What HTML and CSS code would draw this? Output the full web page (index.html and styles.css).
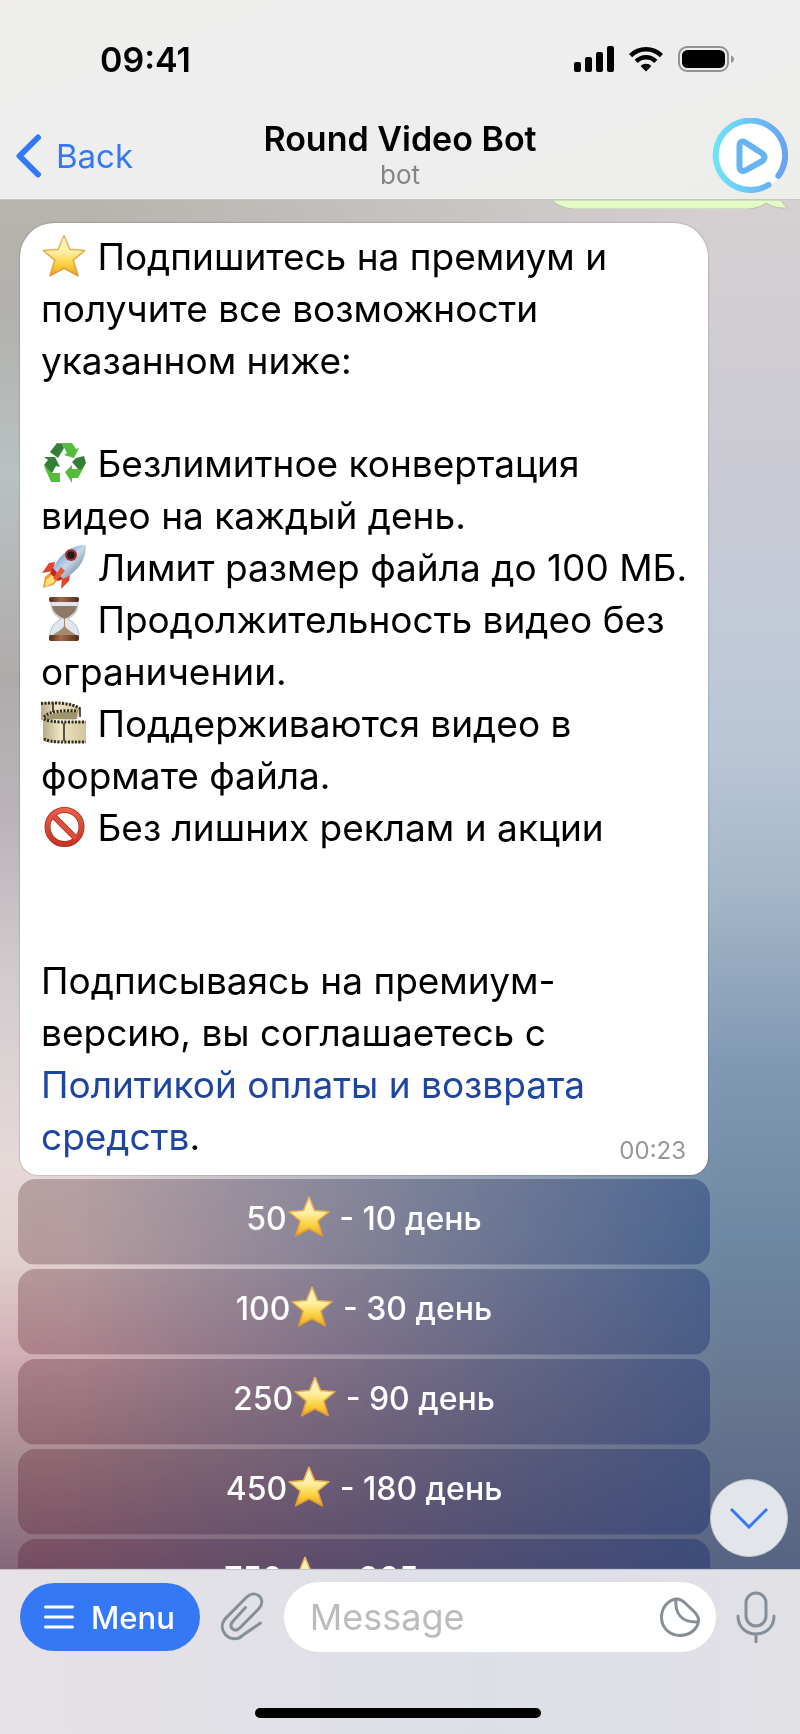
FILE: index.html
```html
<!DOCTYPE html>
<html lang="ru">
<head>
  <meta charset="UTF-8">
  <meta name="viewport" content="width=device-width, initial-scale=1.0">
  <title>Round Video Bot</title>
  <link rel="stylesheet" href="styles.css">
</head>
<body>
  <!-- shared emoji -->
  <svg class="defs" width="0" height="0" aria-hidden="true">
    <defs>
      <linearGradient id="gold" x1="0" y1="0" x2="0" y2="1">
        <stop offset="0" stop-color="#fff6cf"/>
        <stop offset=".4" stop-color="#fff0a4"/>
        <stop offset=".72" stop-color="#fbd140"/>
        <stop offset="1" stop-color="#eba52c"/>
      </linearGradient>
      <linearGradient id="gold-edge" x1="0" y1="0" x2="0" y2="1">
        <stop offset="0" stop-color="#efbb62"/>
        <stop offset="1" stop-color="#e29b2b"/>
      </linearGradient>
      <linearGradient id="hull" x1="0" y1="0" x2="1" y2="1">
        <stop offset="0" stop-color="#3f78c8"/>
        <stop offset=".5" stop-color="#c6d8ea"/>
        <stop offset="1" stop-color="#4e5d70"/>
      </linearGradient>
      <linearGradient id="wood" x1="0" y1="0" x2="1" y2="0">
        <stop offset="0" stop-color="#4f2a1b"/>
        <stop offset=".4" stop-color="#a5694a"/>
        <stop offset="1" stop-color="#4f2a1b"/>
      </linearGradient>
      <linearGradient id="film" x1="0" y1="0" x2="1" y2="0">
        <stop offset="0" stop-color="#b8ab85"/>
        <stop offset=".4" stop-color="#eee5c6"/>
        <stop offset="1" stop-color="#d2c49b"/>
      </linearGradient>
      <linearGradient id="red" x1="0" y1="0" x2="0" y2="1">
        <stop offset="0" stop-color="#e8604a"/>
        <stop offset="1" stop-color="#c93522"/>
      </linearGradient>
      <linearGradient id="ring" x1="0" y1="0" x2="1" y2="0">
        <stop offset="0" stop-color="#6fe3f6"/>
        <stop offset="1" stop-color="#67a3f3"/>
      </linearGradient>
      <symbol id="star" viewBox="0 0 46 46">
        <path d="M23 2.500l5.800 13.800 15 1.200-11.600 9.700 4.700 15.500L23 35.300 9.100 42.700l4.700-15.500L2.200 17.500l15-1.200z" fill="url(#gold)" stroke="url(#gold-edge)" stroke-width="1.600" stroke-linejoin="round"/>
      </symbol>
    </defs>
  </svg>

  <div class="phone">
    <header class="top">
      <div class="status">
        <span class="clock">09:41</span>
        <div class="status-icons">
          <svg width="40" height="26" viewBox="0 0 40 26" aria-hidden="true">
            <rect x="0" y="16" width="7" height="10" rx="2"/>
            <rect x="11" y="11" width="7" height="15" rx="2"/>
            <rect x="22" y="6" width="7" height="20" rx="2"/>
            <rect x="33" y="0" width="7" height="26" rx="2"/>
          </svg>
          <svg width="34" height="26" viewBox="0 0 34 26" aria-hidden="true">
            <g fill="none" stroke="#000" stroke-width="4.500">
              <path d="M1.600 9.600a21.800 21.800 0 0 1 30.800 0"/>
              <path d="M7.200 15.400a13.800 13.800 0 0 1 19.600 0"/>
            </g>
            <path d="M17 25.500l-5.500-5.400a7.800 7.800 0 0 1 11 0z"/>
          </svg>
          <svg width="56" height="26" viewBox="0 0 56 26" aria-hidden="true">
            <rect x="1" y="1" width="49" height="24" rx="8" fill="none" stroke="#929292" stroke-width="2"/>
            <rect x="4" y="4" width="43" height="18" rx="5.500"/>
            <path d="M53 9.500c4 1.500 4 6 0 7.500z" fill="#929292"/>
          </svg>
        </div>
      </div>
      <nav class="nav">
        <a href="#" class="back">
          <svg width="26" height="44" viewBox="0 0 26 44" aria-hidden="true">
            <path d="M22 3.500L3.500 22l18.500 18.500" fill="none" stroke="#3478f6" stroke-width="6" stroke-linecap="round" stroke-linejoin="round"/>
          </svg>
          Back
        </a>
        <div class="title">
          <h1>Round Video Bot</h1>
          <p>bot</p>
        </div>
        <a href="#" class="avatar" aria-label="Round Video Bot">
          <svg width="76" height="76" viewBox="0 0 76 76" aria-hidden="true">
            <circle cx="38" cy="38" r="36" fill="#fff"/>
            <path d="M66.300 58.400A34.700 34.700 0 1 0 56.600 67.300" fill="none" stroke="url(#ring)" stroke-width="6" stroke-linecap="round" transform="translate(0 -.5)"/>
            <path d="M27.500 27.500v21c0 4 2.500 5.500 6 3.800L49.500 43.500c4-2.200 4-6.200 0-8.400L33.500 24.500c-3.500-2-6-.5-6 3z" fill="none" stroke="#66b5f2" stroke-width="6" stroke-linejoin="round"/>
          </svg>
        </a>
      </nav>
    </header>

    <main class="chat">
      <div class="sent">
        <svg width="238" height="9" viewBox="0 0 238 9" aria-hidden="true">
          <path d="M2 0Q11 9 25 9H196Q208 9 216 3Q226 9 238 8Q233 5 231 0Z" fill="#e3fcc6" stroke="#b9c4ab"/>
        </svg>
      </div>

      <article class="message">
        <p>
          <svg class="emoji" viewBox="0 0 46 46" role="img" aria-label="звезда"><use href="#star"/></svg> Подпишитесь на премиум и<br>
          получите все возможности<br>
          указанном ниже:
        </p>
        <p>
          <svg class="emoji" viewBox="0 0 46 46" role="img" aria-label="переработка">
            <g fill="#54bd3b">
              <path d="M16 3h15l4 6 3-1-5 10-10-3 3-2-5-9z"/>
              <path d="M24 32l7-7v4h7l5-8 1 4-7 13h-6v5z"/>
              <path d="M3 26l5 2 3 5h8v9H10z"/>
            </g>
            <g fill="#347e38">
              <path d="M16 3l5 1 2 4-6 10-8-6z"/>
              <path d="M3 17h11l5 10-4-1-4 7-8-8 4-5z"/>
              <path d="M35 18l8-2 2 7-5 7-3-1-6-7z"/>
            </g>
          </svg> Безлимитное конвертация<br>
          видео на каждый день.<br>
          <svg class="emoji" viewBox="0 0 46 46" role="img" aria-label="ракета">
            <path d="M14 18l-6 1-7 10 11-2zM29 31l-1 6-8 8 1-11z" fill="#e2432b"/>
            <path d="M11 27L4 33l-2 11 10-3 7-7z" fill="#f2992c"/>
            <path d="M12 30l-7 6-1 7 8-4 4-5z" fill="#ffe37a"/>
            <path d="M45 1C32 1 20 8 12 24l10 11C37 28 45 16 45 1z" fill="url(#hull)"/>
            <path d="M12 24l-3 5 8 8 5-2z" fill="#b92c22"/>
            <path d="M20 23l-8 11 3 3 9-10z" fill="#e45a3b"/>
            <circle cx="30" cy="11" r="6" fill="#b02a2a"/>
            <circle cx="30" cy="11" r="3.800" fill="#1b1b22"/>
          </svg> Лимит размер файла до 100 МБ.<br>
          <svg class="emoji" viewBox="0 0 46 46" role="img" aria-label="песочные часы">
            <path d="M10 5c0 10 3 14 10 18-7 4-11 8-11 18h29c0-10-4-14-11-18 7-4 10-8 10-18z" fill="#dfe6ee" stroke="#b4bfca"/>
            <path d="M11 10h25c-1 6-5 9-11 12.500h-3C16 19 12 16 11 10z" fill="#8f7866"/>
            <path d="M23 22v8c-2 4-8 6-11 9h23c-3-3-9-5-11-9v-8z" fill="#a58a6e"/>
            <rect x="8" y="1" width="30" height="5" rx="2" fill="url(#wood)"/>
            <rect x="8" y="39" width="30" height="6" rx="2" fill="url(#wood)"/>
          </svg> Продолжительность видео без<br>
          ограничении.<br>
          <svg class="emoji" viewBox="0 0 46 46" role="img" aria-label="киноплёнка">
            <path d="M0 3c12-2 28-1 36 3 6 4 2 10-2 14H0z" fill="url(#film)"/>
            <path d="M2 20c6-7 20-9 34-8v7H14z" fill="#a0946f"/>
            <path d="M2 17c0 5 20 4 43 4v22c-22 0-42 2-43-4z" fill="url(#film)"/>
            <g fill="none" stroke="#2b261a">
              <path d="M0 3.500c14-1 30-1 39 5" stroke-width="3" stroke-dasharray="2 1.500"/>
              <path d="M3 17c5-6 20-7 34-6" stroke-width="3" stroke-dasharray="2 1.500"/>
              <path d="M3 19c8 4 22 3 42 3M3 39c8 4 22 3 42 3" stroke-width="3" stroke-dasharray="2 1.500"/>
              <path d="M12 3v9M39 8v9M23 23v18" stroke-width="1.500"/>
            </g>
          </svg> Поддерживаются видео в<br>
          формате файла.<br>
          <svg class="emoji" viewBox="0 0 46 46" role="img" aria-label="запрещено">
            <g fill="none" stroke="#a92e20">
              <circle cx="23.500" cy="23" r="17" stroke-width="6"/>
              <path d="M12 11.500l23 23" stroke-width="6"/>
            </g>
            <circle cx="23.500" cy="23" r="17" fill="none" stroke="url(#red)" stroke-width="4.500"/>
            <path d="M12 11.500l23 23" fill="none" stroke="#dd4f3b" stroke-width="4.500"/>
          </svg> Без лишних реклам и акции
        </p>
        <p>
          Подписываясь на премиум-<br>
          версию, вы соглашаетесь с<br>
          <a href="#">Политикой оплаты и возврата<br>
          средств</a>.
        </p>
        <time>00:23</time>
      </article>

      <div class="keyboard">
        <button type="button">50<svg class="emoji" role="img" aria-label="звёзд"><use href="#star"/></svg> - 10 день</button>
        <button type="button">100<svg class="emoji" role="img" aria-label="звёзд"><use href="#star"/></svg> - 30 день</button>
        <button type="button">250<svg class="emoji" role="img" aria-label="звёзд"><use href="#star"/></svg> - 90 день</button>
        <button type="button">450<svg class="emoji" role="img" aria-label="звёзд"><use href="#star"/></svg> - 180 день</button>
        <button type="button">750<svg class="emoji" role="img" aria-label="звёзд"><use href="#star"/></svg> - 365 день</button>
      </div>

      <button type="button" class="scroll-down" aria-label="Scroll down">
        <svg width="40" height="22" viewBox="0 0 40 22" aria-hidden="true">
          <path d="M2 2l18 18L38 2" fill="none" stroke="#3478f6" stroke-width="3"/>
        </svg>
      </button>
    </main>

    <footer class="bottom">
      <form class="composer">
        <button type="button" class="menu">
          <svg width="30" height="26" viewBox="0 0 30 26" aria-hidden="true">
            <path d="M1.500 3h27M1.500 13h27M1.500 23h27" stroke="#fff" stroke-width="3" stroke-linecap="round"/>
          </svg>
          Menu
        </button>
        <button type="button" class="icon" aria-label="Attach">
          <svg width="44" height="50" viewBox="0 0 44 50" aria-hidden="true">
            <path d="M25.500 15.500L12.700 29.500c-2.500 3-2.300 5.500-.2 7.300 2.300 2 5 1.600 7.500-1L38.500 17c4.500-5 4-10 .8-12.900C35.600.8 30.500 1.300 26.500 5.300L6.300 25.600C1.500 30.500.8 37 5.300 42.500c5 5.500 12.500 5.500 17.400.8L40.500 31" fill="none" stroke="#858e99" stroke-width="3" stroke-linecap="round" stroke-linejoin="round"/>
          </svg>
        </button>
        <div class="field">
          <input type="text" placeholder="Message" aria-label="Message">
          <button type="button" class="icon" aria-label="Stickers">
            <svg width="40" height="40" viewBox="0 0 40 40" aria-hidden="true">
              <g fill="none" stroke="#858e99" stroke-width="3" stroke-linejoin="round">
                <path d="M16 2C7.500 3.300 1.500 11 1.500 20.500c0 10 8 18 18.500 18S38.500 31 38.500 23c0-3.500-2-6-4.500-8.500L25 6C22 3 19.500 1.500 16 2z"/>
                <path d="M16 2c-1.500 14 5 24 22.500 23"/>
              </g>
            </svg>
          </button>
        </div>
        <button type="button" class="icon" aria-label="Voice message">
          <svg width="40" height="52" viewBox="0 0 40 52" aria-hidden="true">
            <g fill="none" stroke="#858e99" stroke-width="3" stroke-linecap="round">
              <rect x="10" y="2" width="20" height="33" rx="10"/>
              <path d="M2 25c0 11 8 18 18 18s18-7 18-18M20 43v8"/>
            </g>
          </svg>
        </button>
      </form>
      <div class="home-bar"></div>
    </footer>
  </div>
</body>
</html>
```
FILE: styles.css
```css
* {
  box-sizing: border-box;
}
body {
  margin: 0;
  font-family: Inter, "Liberation Sans", sans-serif;
  color: #000;
}
h1, p {
  margin: 0;
}
a {
  text-decoration: none;
}
button, input {
  font: inherit;
  border: none;
  padding: 0;
  background: none;
}
svg {
  display: block;
}
.defs {
  position: absolute;
}
.phone {
  display: flex;
  flex-direction: column;
  height: 100vh;
  overflow: hidden;
}

/* status bar and title */
.top {
  flex: none;
  background: linear-gradient(160deg, #efeeec, #eeeeef 50%, #edeeea);
  border-bottom: 1px solid #c5c5c3;
}
.status {
  display: flex;
  justify-content: space-between;
  align-items: center;
  height: 118px;
  padding: 0 66px 0 100px;
}
.clock {
  font-size: 34px;
  font-weight: 600;
}
.status-icons {
  display: flex;
  gap: 15px;
}
.nav {
  display: grid;
  grid-template-columns: 1fr auto 1fr;
  align-items: center;
  height: 81px;
  padding: 0 12px 6px;
}
.back {
  display: flex;
  align-items: center;
  gap: 14px;
  padding-left: 4px;
  color: #3478f6;
  font-size: 33px;
}
.title {
  padding-bottom: 2px;
  text-align: center;
}
.title h1 {
  font-size: 34px;
  font-weight: 600;
  line-height: 40px;
}
.title p {
  color: #858585;
  font-size: 26px;
  line-height: 32px;
}
.avatar {
  justify-self: end;
}

/* conversation */
.chat {
  position: relative;
  flex: 1;
  min-height: 0;
  overflow: hidden;
  padding: 0 12px 0 18px;
  background: linear-gradient(#b8b4ae, #b2b1ad 8%, #b9c1c2 20%, #b0abab 35%, #bab4b9 45%, #d2cccf 57%, #e5d9d8 70%, #e2d0d0 77%, #d1b0b6 84%, #a98b92 92%, #86677a);
}
.chat::before {
  content: "";
  position: absolute;
  inset: 0;
  background: linear-gradient(#d5d0d1, #cdcbd3 16%, #c3cad7 30%, #b9c6d6 40%, #a6b7c9 50%, #8099b3 63%, #6d88a2 76%, #66768f 88%, #566483);
  mask-image: linear-gradient(to right, transparent 10%, #000 90%);
}
.sent {
  position: relative;
  display: flex;
  justify-content: flex-end;
  height: 23px;
}
.message {
  position: relative;
  width: fit-content;
  min-width: 688px;
  margin-left: 2px;
  padding: 8px 18px 12px 21px;
  background: #fff;
  border-radius: 34px 34px 18px 18px;
  box-shadow: 0 0 1px 1px rgba(0, 0, 0, 0.12);
  font-size: 37px;
  line-height: 52px;
}
.message p + p {
  margin-top: 51px;
}
.message p:nth-of-type(3) {
  margin-top: 101px;
}
.message a {
  color: #1f45a3;
}
.message time {
  position: absolute;
  right: 22px;
  bottom: 8px;
  color: #979797;
  font-size: 24px;
  line-height: 32px;
}
.emoji {
  display: inline-block;
  width: 46px;
  height: 46px;
  vertical-align: -9px;
}
.keyboard {
  position: relative;
  display: flex;
  flex-direction: column;
  gap: 4px;
  width: 692px;
  margin-top: 4px;
}
.keyboard button {
  flex: none;
  height: 86px;
  padding-bottom: 8px;
  color: #fff;
  font-size: 32px;
  font-weight: 500;
  line-height: 44px;
  background: linear-gradient(to right, rgba(130, 30, 50, 0.1), rgba(30, 50, 150, 0.2));
  border-radius: 18px;
  backdrop-filter: brightness(0.82) saturate(1.3);
}
.keyboard .emoji {
  width: 44px;
  height: 44px;
}
.scroll-down {
  position: absolute;
  right: 12px;
  bottom: 12px;
  display: grid;
  place-items: center;
  width: 78px;
  height: 78px;
  background: #e2e6eb;
  border: 1px solid #c3c7cf;
  border-radius: 50%;
}

/* message box */
.bottom {
  flex: none;
  padding: 12px 24px 16px 20px;
  background: linear-gradient(to right, #e6e2e6, #dddfe7 60%, #e1e1e6);
  border-top: 1px solid #c4c4cc;
}
.composer {
  display: flex;
  align-items: center;
  height: 70px;
}
.menu {
  display: flex;
  align-items: center;
  gap: 17px;
  height: 68px;
  padding: 0 25px 0 24px;
  color: #fff;
  font-size: 31px;
  font-weight: 500;
  background: #3478f6;
  border-radius: 34px;
}
.composer > .icon {
  margin-left: 20px;
}
.field {
  flex: 1;
  display: flex;
  align-items: center;
  min-width: 0;
  height: 70px;
  margin-left: 20px;
  padding: 0 16px 0 26px;
  background: #fff;
  border-radius: 35px;
}
.field input {
  flex: 1;
  min-width: 0;
  font-size: 36px;
  outline: none;
}
.field input::placeholder {
  color: #bcbcbf;
}
.home-bar {
  width: 286px;
  height: 10px;
  margin: 56px auto 0;
  background: #000;
  border-radius: 5px;
}
```
